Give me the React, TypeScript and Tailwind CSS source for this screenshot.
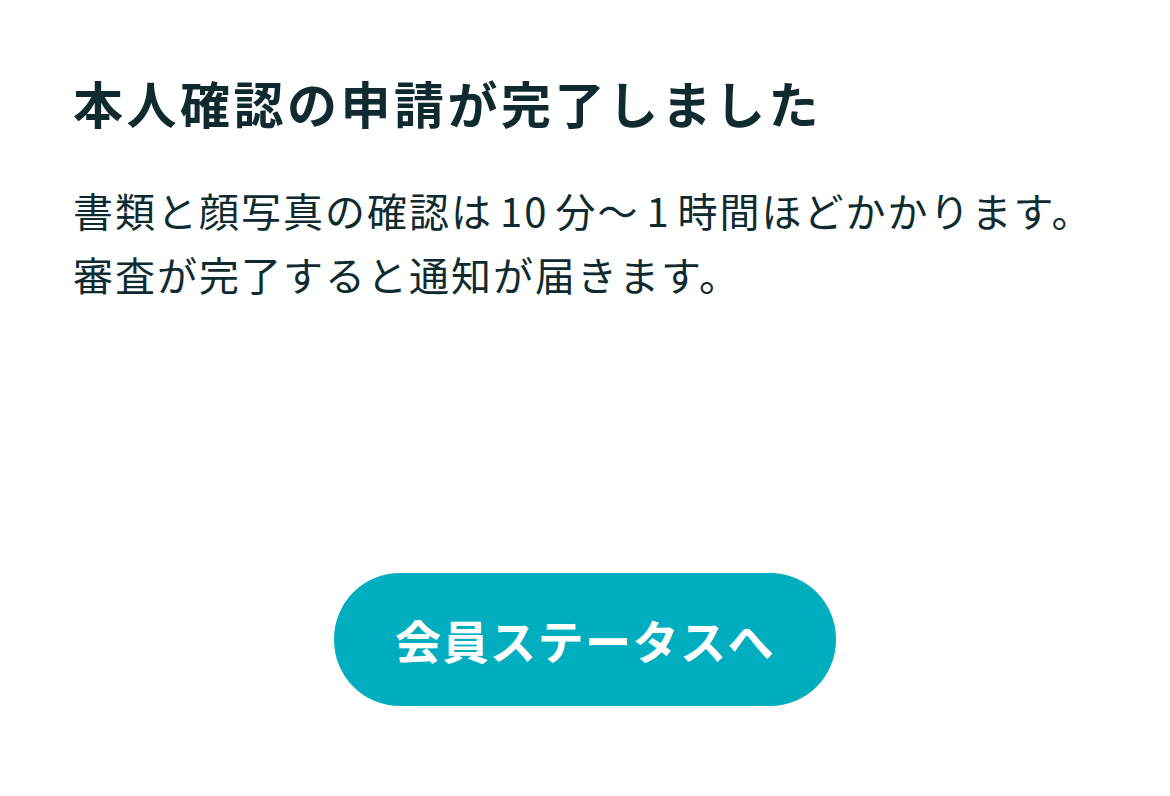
export default function App() {
  return (
    <div
      className="w-[1170px] h-[796px] bg-white flex flex-col text-[#0f2b2f]"
      style={{ fontFamily: '"Noto Sans CJK JP", "Noto Sans", sans-serif' }}
    >
      <div className="px-[73px] pt-[68px]">
        <h1 className="text-[50px] leading-[68px] font-bold tracking-[3.5px]">
          本人確認の申請が完了しました
        </h1>
        <p className="mt-[42px] text-[40px] leading-[64px] tracking-[2px]">
          書類と顔写真の確認は<span className="mx-[7px]">10</span>分〜<span className="mx-[7px]">1</span>時間ほどかかります。
          <br />
          審査が完了すると通知が届きます。
        </p>
      </div>
      <div className="flex justify-center mt-[267px]">
        <button className="w-[502px] h-[133px] rounded-[66px] bg-[#00aec0] text-white text-[46px] font-bold tracking-[1.5px]">
          会員ステータスへ
        </button>
      </div>
    </div>
  );
}
